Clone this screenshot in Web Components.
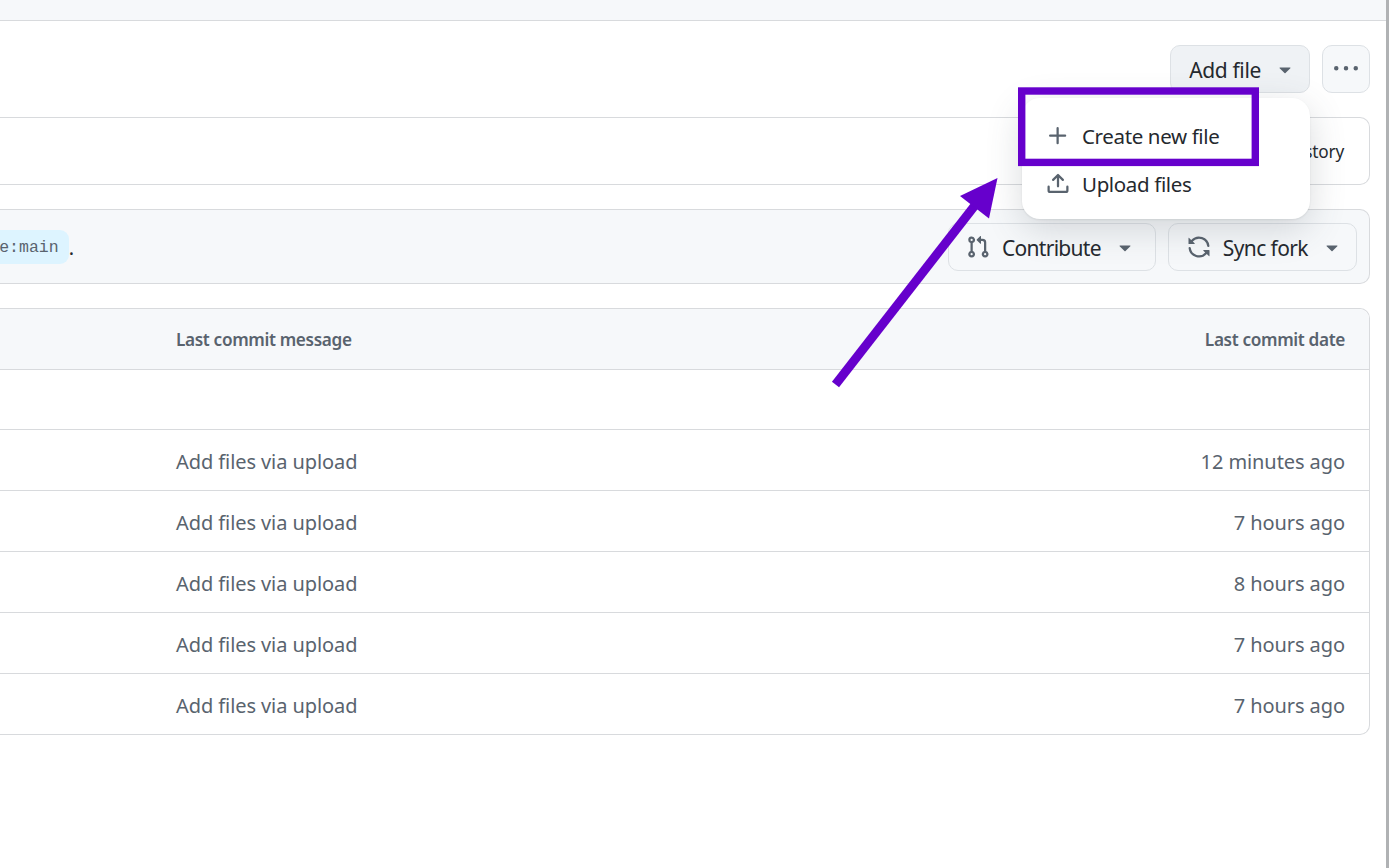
<!DOCTYPE html>
<html lang="en">
<head>
<meta charset="utf-8">
<title>Add file</title>
<style>
  html, body { margin: 0; height: 100%; background: #fff; overflow: hidden; }
  body { font-family: "Noto Sans", "Open Sans", sans-serif; color: #25292e; }
</style>
</head>
<body>
<repo-page></repo-page>

<script>
const ICONS = {
    plus: '<path d="M7.75 2a.75.75 0 0 1 .75.75V7h4.25a.75.75 0 0 1 0 1.5H8.5v4.25a.75.75 0 0 1-1.5 0V8.5H2.75a.75.75 0 0 1 0-1.5H7V2.75A.75.75 0 0 1 7.75 2Z"/>',
    upload: '<path d="M2.75 14A1.75 1.75 0 0 1 1 12.25v-2.5a.75.75 0 0 1 1.5 0v2.5c0 .138.112.25.25.25h10.5a.25.25 0 0 0 .25-.25v-2.5a.75.75 0 0 1 1.5 0v2.5A1.75 1.75 0 0 1 13.25 14Z"/><path d="M11.78 4.72a.749.749 0 1 1-1.06 1.06L8.75 3.811V9.5a.75.75 0 0 1-1.5 0V3.811L5.28 5.78a.749.749 0 1 1-1.06-1.06l3.25-3.25a.749.749 0 0 1 1.06 0l3.25 3.25Z"/>',
    pull: '<path d="M1.5 3.25a2.25 2.25 0 1 1 3 2.122v5.256a2.251 2.251 0 1 1-1.5 0V5.372A2.25 2.25 0 0 1 1.5 3.25Zm5.677-.177L9.573.677A.25.25 0 0 1 10 .854V2.5h1A2.5 2.5 0 0 1 13.5 5v5.628a2.251 2.251 0 1 1-1.5 0V5a1 1 0 0 0-1-1h-1v1.646a.25.25 0 0 1-.427.177L7.177 3.427a.25.25 0 0 1 0-.354ZM3.75 2.5a.75.75 0 1 0 0 1.5.75.75 0 0 0 0-1.5Zm0 9.5a.75.75 0 1 0 0 1.5.75.75 0 0 0 0-1.5Zm8.25.75a.75.75 0 1 0 1.5 0 .75.75 0 0 0-1.5 0Z"/>',
    sync: '<path d="M1.705 8.005a.75.75 0 0 1 .834.656 5.5 5.5 0 0 0 9.592 2.97l-1.204-1.204a.25.25 0 0 1 .177-.427h3.646a.25.25 0 0 1 .25.25v3.646a.25.25 0 0 1-.427.177l-1.38-1.38A7.002 7.002 0 0 1 1.05 8.84a.75.75 0 0 1 .656-.834ZM8 2.5a5.487 5.487 0 0 0-4.131 1.869l1.204 1.204A.25.25 0 0 1 4.896 6H1.25A.25.25 0 0 1 1 5.75V2.104a.25.25 0 0 1 .427-.177l1.38 1.38A7.002 7.002 0 0 1 14.95 7.16a.75.75 0 0 1-1.49.178A5.5 5.5 0 0 0 8 2.5Z"/>',
    kebab: '<path d="M8 9a1.5 1.5 0 1 0 0-3 1.5 1.5 0 0 0 0 3ZM1.5 9a1.5 1.5 0 1 0 0-3 1.5 1.5 0 0 0 0 3Zm13 0a1.5 1.5 0 1 0 0-3 1.5 1.5 0 0 0 0 3Z"/>',
    caret: '<path d="m4.427 7.427 3.396 3.396a.25.25 0 0 0 .354 0l3.396-3.396A.25.25 0 0 0 11.396 7H4.604a.25.25 0 0 0-.177.427Z"/>'
};

class GhIcon extends HTMLElement {
    connectedCallback() {
        const size = this.getAttribute('size') || 24;
        const root = this.attachShadow({ mode: 'open' });
        root.innerHTML = `
          <style>
            :host { display: inline-flex; flex: none; color: #59636e; }
            svg { display: block; fill: currentColor; }
          </style>
          <svg width="${size}" height="${size}" viewBox="0 0 16 16">${ICONS[this.getAttribute('name')]}</svg>`;
    }
}
customElements.define('gh-icon', GhIcon);

const buttonTemplate = document.createElement('template');
buttonTemplate.innerHTML = `
  <style>
    :host {
      display: inline-flex;
      align-items: center;
      box-sizing: border-box;
      height: 48px;
      gap: 12px;
      padding: 0 var(--pad-end, 12px) 0 var(--pad-start, 18px);
      border: 1px solid #dde1e5;
      border-radius: 10px;
      background: var(--btn-bg, #f6f8fa);
      font-size: 21px;
      letter-spacing: var(--btn-track, -0.35px);
      white-space: nowrap;
      color: #25292e;
    }
    .label { padding-top: var(--label-shift, 2px); }
  </style>
  <slot name="icon"></slot>
  <span class="label"><slot></slot></span>
  <gh-icon name="caret"></gh-icon>
`;

class GhButton extends HTMLElement {
    constructor() {
        super();
        this.root = this.attachShadow({ mode: 'open' });
        this.root.appendChild(buttonTemplate.content.cloneNode(true));
    }
}
customElements.define('gh-button', GhButton);

class GhIconButton extends HTMLElement {
    constructor() {
        super();
        this.attachShadow({ mode: 'open' }).innerHTML = `
          <style>
            :host {
              display: inline-flex;
              align-items: center;
              justify-content: center;
              box-sizing: border-box;
              width: 48px;
              height: 48px;
              border: 1px solid #dde1e5;
              border-radius: 10px;
              background: #f6f8fa;
            }
          </style>
          <slot></slot>`;
    }
}
customElements.define('gh-icon-button', GhIconButton);

class GhBox extends HTMLElement {
    constructor() {
        super();
        this.attachShadow({ mode: 'open' }).innerHTML = `
          <style>
            :host {
              display: block;
              box-sizing: border-box;
              margin: 0 16px 0 0;
              border: 1px solid #d8dadd;
              border-left: 0;
              border-radius: 0 10px 10px 0;
              background: var(--box-bg, #fff);
            }
          </style>
          <slot></slot>`;
    }
}
customElements.define('gh-box', GhBox);

class LastCommitBar extends HTMLElement {
    constructor() {
        super();
        this.attachShadow({ mode: 'open' }).innerHTML = `
          <style>
            :host {
              display: flex;
              align-items: center;
              justify-content: flex-end;
              box-sizing: border-box;
              height: 66px;
              padding: 1px 25px 0 0;
              font-size: 17.2px;
              letter-spacing: -0.2px;
              color: #25292e;
            }
          </style>
          <slot></slot>`;
    }
}
customElements.define('last-commit-bar', LastCommitBar);

class ForkBar extends HTMLElement {
    constructor() {
        super();
        this.attachShadow({ mode: 'open' }).innerHTML = `
          <style>
            :host {
              display: flex;
              align-items: center;
              justify-content: space-between;
              height: 73px;
              padding-right: 12px;
            }
            .note {
              display: flex;
              align-items: center;
              justify-content: flex-end;
              width: 74px;
              overflow: hidden;
              font-size: 18px;
              color: #25292e;
            }
            code {
              flex: none;
              padding: 0 10px;
              height: 34px;
              border-radius: 9px;
              background: #ddf4ff;
              color: #59636e;
              font: 16.5px/36px "Liberation Mono", monospace;
            }
            .dot { flex: none; font: 20px/34px "Noto Sans", sans-serif; padding-top: 2px; }
            .actions { display: flex; gap: 12px; }
          </style>
          <div class="note"><code><slot name="branch"></slot></code><span class="dot">.</span></div>
          <div class="actions"><slot></slot></div>`;
    }
}
customElements.define('fork-bar', ForkBar);

class FileHeader extends HTMLElement {
    constructor() {
        super();
        this.attachShadow({ mode: 'open' }).innerHTML = `
          <style>
            :host {
              display: flex;
              align-items: center;
              justify-content: space-between;
              box-sizing: border-box;
              height: 61px;
              padding: 0 24px 0 176px;
              border-bottom: 1px solid #d8dadd;
              border-radius: 0 10px 0 0;
              background: #f6f8fa;
              font-size: 17.2px;
              font-weight: 600;
              letter-spacing: -0.35px;
              color: #59636e;
            }
          </style>
          <slot></slot>`;
    }
}
customElements.define('file-header', FileHeader);

class FileRow extends HTMLElement {
    constructor() {
        super();
        this.attachShadow({ mode: 'open' }).innerHTML = `
          <style>
            :host {
              display: flex;
              align-items: center;
              justify-content: space-between;
              box-sizing: border-box;
              height: 61px;
              padding: 2px 24px 0 176px;
              border-bottom: 1px solid #d8dadd;
              font-size: 20px;
              letter-spacing: -0.08px;
              color: #59636e;
            }
            :host(:first-of-type) { height: 60px; }
            :host(:last-child) { border-bottom: 0; height: 60px; }
          </style>
          <span>${this.getAttribute('message') || ''}</span>
          <span>${this.getAttribute('date') || ''}</span>`;
    }
}
customElements.define('file-row', FileRow);

class AddFileMenu extends HTMLElement {
    constructor() {
        super();
        this.attachShadow({ mode: 'open' }).innerHTML = `
          <style>
            :host {
              position: absolute;
              left: 1022px;
              top: 98px;
              display: flex;
              flex-direction: column;
              box-sizing: border-box;
              width: 288px;
              height: 121px;
              padding-top: 14px;
              border-radius: 18px;
              background: #fff;
              box-shadow: 0 1px 2px rgba(31,35,40,.08), 0 10px 36px rgba(66,74,83,.2);
              font-size: 20.5px;
              letter-spacing: -0.36px;
              color: #25292e;
            }
          </style>
          <slot></slot>`;
    }
}
customElements.define('add-file-menu', AddFileMenu);

class MenuItem extends HTMLElement {
    constructor() {
        super();
        this.attachShadow({ mode: 'open' }).innerHTML = `
          <style>
            :host {
              display: flex;
              align-items: center;
              gap: 12px;
              height: 48px;
              padding-left: 24px;
            }
          </style>
          <slot name="icon"></slot>
          <slot></slot>`;
    }
}
customElements.define('menu-item', MenuItem);

// purple markup painted over the screenshot
class AnnotationLayer extends HTMLElement {
    constructor() {
        super();
        this.attachShadow({ mode: 'open' }).innerHTML = `
          <style>
            :host { position: absolute; inset: 0; pointer-events: none; }
            svg { display: block; }
          </style>
          <svg width="1392" height="868" viewBox="0 0 1392 868">
            <rect x="1021.7" y="91" width="233.6" height="71.4" fill="none" stroke="#6600cc" stroke-width="7.4"/>
            <line x1="835.5" y1="384.5" x2="976" y2="204" stroke="#6600cc" stroke-width="9"/>
            <polygon points="997.5,178 960,196 989,218.5" fill="#6600cc"/>
          </svg>`;
    }
}
customElements.define('annotation-layer', AnnotationLayer);

class RepoPage extends HTMLElement {
    constructor() {
        super();
        this.attachShadow({ mode: 'open' }).innerHTML = `
          <style>
            :host {
              position: relative;
              display: flex;
              width: 1392px;
              height: 868px;
              overflow: hidden;
            }
            main { flex: none; width: 1386px; display: flex; flex-direction: column; }
            .strip { flex: none; width: 3px; background: #b0b2b4; }
            .top { flex: none; height: 20px; border-bottom: 1px solid #d8dadd; background: #f6f8fa; }
            .actions { display: flex; justify-content: flex-end; gap: 12px; margin: 24px 16px 24px 0; }
            gh-box + gh-box { margin-top: 24px; }
            .sync { --box-bg: #f6f8fa; }
            .add { --btn-bg: #eff2f5; --label-shift: 1px; }
            .contribute { --pad-start: 17px; --pad-end: 18px; --btn-track: -0.72px; }
            .fork { --pad-start: 18px; --pad-end: 12px; --btn-track: -0.6px; }
          </style>
          <main>
            <div class="top"></div>
            <div class="actions">
              <gh-button class="add">Add file</gh-button>
              <gh-icon-button><gh-icon name="kebab"></gh-icon></gh-icon-button>
            </div>
            <gh-box><last-commit-bar>History</last-commit-bar></gh-box>
            <gh-box class="sync">
              <fork-bar>
                <span slot="branch">e:main</span>
                <gh-button class="contribute"><gh-icon slot="icon" name="pull"></gh-icon>Contribute</gh-button>
                <gh-button class="fork"><gh-icon slot="icon" name="sync"></gh-icon>Sync fork</gh-button>
              </fork-bar>
            </gh-box>
            <gh-box>
              <file-header><span>Last commit message</span><span>Last commit date</span></file-header>
              <file-row></file-row>
              <file-row message="Add files via upload" date="12 minutes ago"></file-row>
              <file-row message="Add files via upload" date="7 hours ago"></file-row>
              <file-row message="Add files via upload" date="8 hours ago"></file-row>
              <file-row message="Add files via upload" date="7 hours ago"></file-row>
              <file-row message="Add files via upload" date="7 hours ago"></file-row>
            </gh-box>
          </main>
          <div class="strip"></div>
          <add-file-menu>
            <menu-item><gh-icon slot="icon" name="plus"></gh-icon>Create new file</menu-item>
            <menu-item><gh-icon slot="icon" name="upload"></gh-icon>Upload files</menu-item>
          </add-file-menu>
          <annotation-layer></annotation-layer>`;
    }
}
customElements.define('repo-page', RepoPage);
</script>
</body>
</html>
